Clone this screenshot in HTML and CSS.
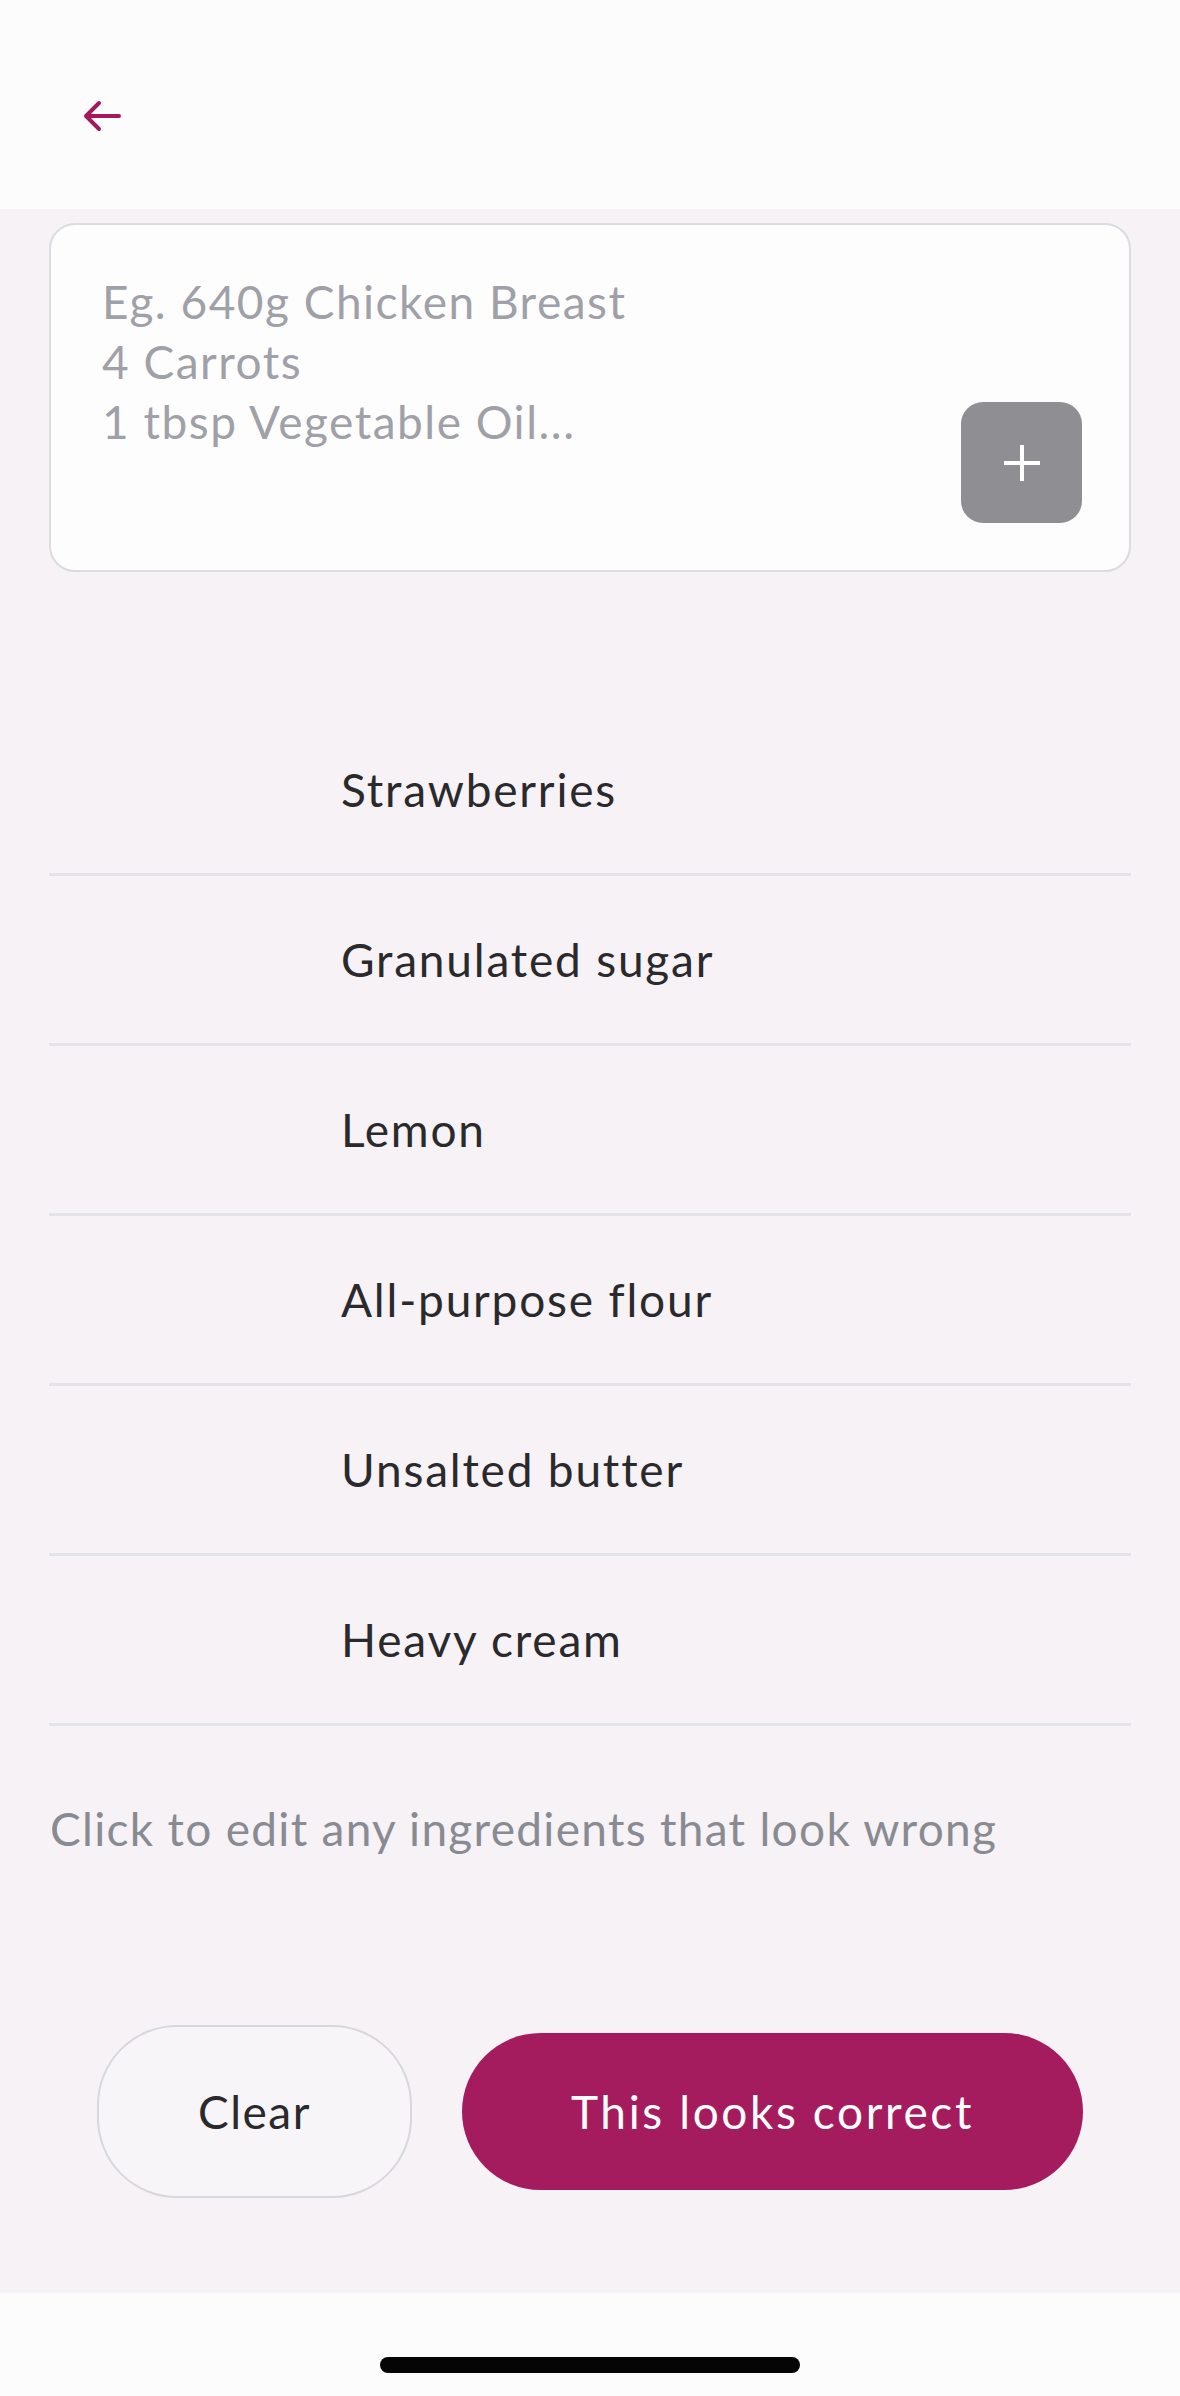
FILE: index.html
```html
<!DOCTYPE html>
<html>
<head>
    <title>Check Ingredients</title>
    <link rel="stylesheet" href="styles.css">
</head>
<body>
    <div class="screen">
        <header class="top-bar">
            <button class="back-btn" aria-label="Back">
                <svg width="40" height="34" viewBox="0 0 40 34">
                    <path d="M37 17 H4 M17 4 L4 17 L17 30" fill="none" stroke="#a3195b" stroke-width="4" stroke-linecap="round" stroke-linejoin="round"/>
                </svg>
            </button>
        </header>

        <main class="content">
            <div class="input-card">
                <div class="placeholder">
                    Eg. 640g Chicken Breast<br>
                    4 Carrots<br>
                    1 tbsp Vegetable Oil...
                </div>
                <button class="add-btn" aria-label="Add">
                    <svg width="40" height="40" viewBox="0 0 40 40">
                        <path d="M20 2 V38 M2 20 H38" stroke="#fff" stroke-width="4"/>
                    </svg>
                </button>
            </div>

            <ul class="ingredients">
                <li><span class="qty"></span><span class="name">Strawberries</span></li>
                <li><span class="qty"></span><span class="name">Granulated sugar</span></li>
                <li><span class="qty"></span><span class="name">Lemon</span></li>
                <li><span class="qty"></span><span class="name">All-purpose flour</span></li>
                <li><span class="qty"></span><span class="name">Unsalted butter</span></li>
                <li><span class="qty"></span><span class="name">Heavy cream</span></li>
            </ul>

            <p class="hint">Click to edit any ingredients that look wrong</p>

            <div class="actions">
                <button class="btn-clear">Clear</button>
                <button class="btn-confirm">This looks correct</button>
            </div>
        </main>

        <footer class="home-bar">
            <div class="home-indicator"></div>
        </footer>
    </div>
</body>
</html>
```

FILE: styles.css
```css
body {
    margin: 0;
    font-family: Lato, "Noto Sans", sans-serif;
    background-color: #fdfcfd;
}

.screen {
    display: flex;
    flex-direction: column;
    min-height: 2396px;
}

button {
    font-family: inherit;
    cursor: pointer;
}

.top-bar {
    height: 209px;
    background-color: #fdfcfd;
    display: flex;
    align-items: center;
    padding-left: 82px;
    box-sizing: border-box;
}

.back-btn {
    background: none;
    border: none;
    padding: 0;
    display: flex;
    margin-top: 22px;
}

.content {
    flex: 1;
    background-color: #f6f2f6;
    padding: 14px 49px 0 49px;
}

.input-card {
    height: 349px;
    box-sizing: border-box;
    background-color: #fefdfe;
    border: 2px solid #dcdbe0;
    border-radius: 26px;
    padding: 47px 47px 47px 51px;
    display: flex;
    justify-content: space-between;
}

.placeholder {
    font-size: 46px;
    line-height: 60px;
    letter-spacing: 1.5px;
    color: #a0a1a8;
}

.add-btn {
    align-self: flex-end;
    width: 121px;
    height: 121px;
    border: none;
    border-radius: 22px;
    background-color: #8e8e93;
    display: flex;
    align-items: center;
    justify-content: center;
}

.ingredients {
    list-style: none;
    margin: 134px 0 0 0;
    padding: 0;
}

.ingredients li {
    height: 170px;
    box-sizing: border-box;
    border-bottom: 3px solid #e3e3e8;
    display: flex;
    align-items: center;
}

.qty {
    width: 292px;
}

.name {
    font-size: 46px;
    letter-spacing: 1.8px;
    color: #2a2a2d;
}

.hint {
    margin: 73px 0 0 1px;
    font-size: 46px;
    line-height: 60px;
    letter-spacing: 1.3px;
    color: #898b92;
}

.actions {
    display: flex;
    justify-content: center;
    align-items: center;
    gap: 50px;
    margin-top: 166px;
}

.btn-clear {
    width: 315px;
    height: 173px;
    border: 2px solid #d8d8dc;
    border-radius: 80px;
    background-color: #f8f5f8;
    font-size: 46px;
    letter-spacing: 1.5px;
    color: #2a2a2d;
}

.btn-confirm {
    width: 621px;
    height: 157px;
    border: none;
    border-radius: 80px;
    background-color: #a51c5e;
    font-size: 46px;
    letter-spacing: 2.6px;
    color: #ffffff;
}

.home-bar {
    height: 103px;
    background-color: #fdfcfd;
    display: flex;
    justify-content: center;
    padding-top: 64px;
    box-sizing: border-box;
}

.home-indicator {
    width: 420px;
    height: 16px;
    border-radius: 8px;
    background-color: #050505;
}
```
